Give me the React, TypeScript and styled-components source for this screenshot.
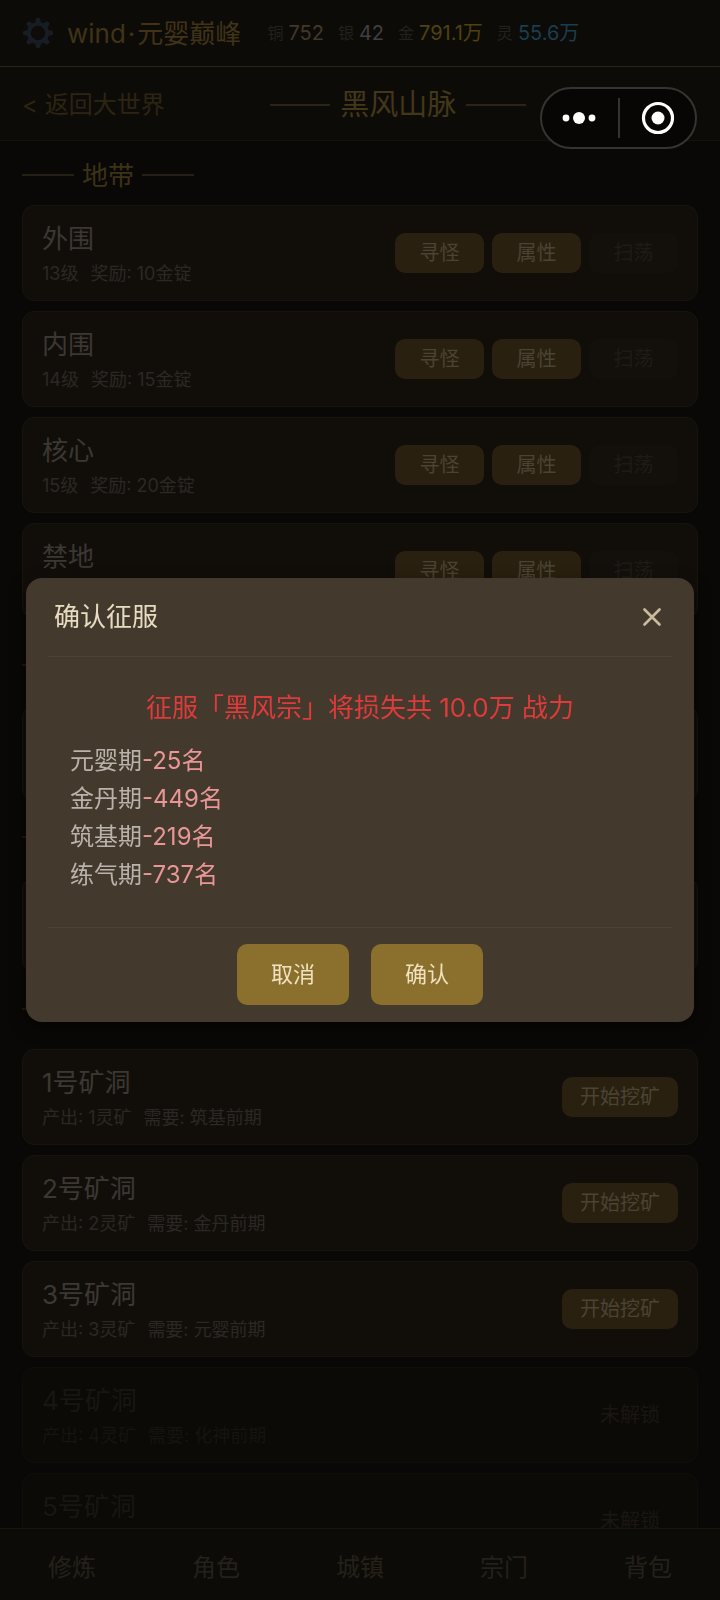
import React from "react";
import styled, { createGlobalStyle } from "styled-components";

const GlobalStyle = createGlobalStyle`
  *, *::before, *::after { box-sizing: border-box; }
  body {
    margin: 0;
    background: #090806;
    font-family: Inter, "Noto Sans CJK SC", sans-serif;
    font-weight: 400;
  }
  button { font: inherit; border: 0; padding: 0; background: none; cursor: pointer; }
  h1, h2, h3, p, ul { margin: 0; padding: 0; font-weight: 400; list-style: none; }
`;

const Page = styled.div`
  height: 100vh;
  display: flex;
  flex-direction: column;
  overflow: hidden;
`;

const TopBar = styled.header`
  flex: none;
  height: 67px;
  padding: 0 22px;
  display: flex;
  align-items: center;
  background: #0d0b07;
  border-bottom: 1px solid #2a2316;
`;

const GearButton = styled.button`
  display: flex;
  width: 32px;
  height: 32px;
  border-radius: 50%;
  background: #0f0b08;
`;

const PlayerName = styled.h1`
  margin-left: 13px;
  padding-top: 2px;
  font-size: 26px;
  line-height: 32px;
  color: #403316;
  white-space: nowrap;
`;

const NameDot = styled.span`
  margin: 0 2px;
`;

const Wallet = styled.ul`
  display: flex;
  gap: 14px;
  margin-left: 26px;
`;

const Coin = styled.li<{ $color: string }>`
  display: flex;
  align-items: center;
  gap: 5px;
  font-size: 20px;
  line-height: 28px;
  color: ${(p) => p.$color};
`;

const CoinLabel = styled.span`
  font-size: 16px;
  color: #24211d;
`;

const PlaceBar = styled.div`
  flex: none;
  height: 74px;
  padding: 2px 22px 0;
  display: flex;
  align-items: center;
  justify-content: space-between;
  background: #0d0b07;
  border-bottom: 1px solid #15120d;
`;

const BackLink = styled.a`
  font-size: 24px;
  line-height: 32px;
  color: #2d2413;
  text-decoration: none;
  white-space: nowrap;
`;

const BarEnd = styled.span`
  width: 66px;
`;

const Ruled = styled.div<{ $rule: number; $gap: number; $color: string }>`
  display: flex;
  align-items: center;
  gap: ${(p) => p.$gap}px;
  &::before,
  &::after {
    content: "";
    width: ${(p) => p.$rule}px;
    height: 2px;
    background: ${(p) => p.$color};
  }
`;

const PlaceName = styled.h2`
  font-size: 29px;
  line-height: 36px;
  color: #43371a;
`;

const Content = styled.main`
  flex: 1;
  min-height: 0;
  overflow: hidden;
  padding: 14px 22px 0;
  display: flex;
  flex-direction: column;
  gap: 16px;
`;

const Section = styled.section<{ $headGap: number; $end?: number }>`
  flex: none;
  display: flex;
  flex-direction: column;
  gap: ${(p) => p.$headGap}px;
  padding-bottom: ${(p) => p.$end || 0}px;
`;

const SectionHead = styled(Ruled)`
  height: 40px;
`;

const SectionTitle = styled.h3`
  padding-top: 2px;
  font-size: 26px;
  line-height: 38px;
  color: #3d3218;
`;

const CardList = styled.ul`
  display: flex;
  flex-direction: column;
  gap: 10px;
`;

const Card = styled.li<{ $locked?: boolean; $edge?: string }>`
  min-height: 96px;
  padding: 0 19px;
  display: flex;
  align-items: center;
  justify-content: space-between;
  background: ${(p) => (p.$locked ? "#0b0a07" : "#110e0a")};
  border: 1px solid ${(p) => p.$edge || (p.$locked ? "#100e0b" : "#17140f")};
  border-radius: 12px;
  --title: ${(p) => (p.$locked ? "#181612" : "#3b3833")};
  --note: ${(p) => (p.$locked ? "#171310" : "#2b2824")};
`;

const CardText = styled.div`
  display: flex;
  flex-direction: column;
  gap: 5px;
  padding-top: 3px;
`;

const CardTitle = styled.h3`
  font-size: 26px;
  line-height: 34px;
  color: var(--title);
`;

const CardNote = styled.p`
  display: flex;
  gap: 12px;
  font-size: 18px;
  line-height: 26px;
  color: var(--note);
`;

const Actions = styled.div`
  display: flex;
  gap: 8px;
`;

const Action = styled.button<{ $wide?: boolean; $tone?: "off" | "bare" }>`
  min-width: 89px;
  height: 40px;
  padding: 0 ${(p) => (p.$wide ? 18 : 20)}px 3px;
  border-radius: 10px;
  font-size: 20px;
  white-space: nowrap;
  background: ${(p) => (p.$tone === "bare" ? "transparent" : p.$tone === "off" ? "#13100c" : "#2a200f")};
  color: ${(p) => (p.$tone === "bare" ? "#1b1613" : p.$tone === "off" ? "#1e1b16" : "#4b4334")};
`;

const TabBar = styled.nav`
  flex: none;
  height: 72px;
  display: flex;
  background: #0d0b07;
  border-top: 1px solid #1a1610;
`;

const Tab = styled.button`
  flex: 1;
  padding-top: 2px;
  font-size: 24px;
  color: #25211a;
`;

const Capsule = styled.div`
  position: fixed;
  top: 87px;
  right: 23px;
  width: 157px;
  height: 62px;
  display: flex;
  align-items: center;
  background: #070605;
  border: 2px solid #353433;
  border-radius: 31px;
`;

const CapsuleButton = styled.button`
  flex: 1;
  height: 40px;
  padding-right: 2px;
  display: flex;
  align-items: center;
  justify-content: center;
  & + & {
    padding: 0 0 0 2px;
    border-left: 2px solid #343332;
  }
`;

const Overlay = styled.div`
  position: fixed;
  inset: 0;
  padding: 0 26px;
  display: flex;
  align-items: center;
  justify-content: center;
`;

const Dialog = styled.div`
  width: 100%;
  padding: 0 22px 17px;
  background: #43392d;
  border-radius: 16px;
  box-shadow: 0 6px 16px rgba(0, 0, 0, 0.5);
`;

const DialogHead = styled.div`
  height: 79px;
  padding: 0 6px;
  display: flex;
  align-items: center;
  justify-content: space-between;
  border-bottom: 1px solid #4d4237;
`;

const DialogTitle = styled.h2`
  font-size: 26px;
  line-height: 34px;
  color: #e8dcc0;
`;

const CloseButton = styled.button`
  display: flex;
  width: 28px;
  height: 28px;
  align-items: center;
  justify-content: center;
`;

const DialogBody = styled.div`
  padding: 31px 22px 33px;
`;

const Warning = styled.p`
  margin-bottom: 14px;
  font-size: 26px;
  line-height: 40px;
  text-align: center;
  color: #de3b3a;
`;

const Loss = styled.li`
  font-size: 24px;
  line-height: 38px;
  color: #b9b3ab;
`;

const LossCount = styled.span`
  color: #e89696;
`;

const DialogFoot = styled.div`
  padding-top: 16px;
  display: flex;
  justify-content: center;
  gap: 22px;
  border-top: 1px solid #4d4237;
`;

const DialogButton = styled.button`
  width: 112px;
  height: 61px;
  padding-bottom: 6px;
  border-radius: 10px;
  font-size: 22px;
  color: #f0e2c0;
  background: #8b6f2c;
`;

const coins = [
  { label: "铜", value: "752", color: "#42382a" },
  { label: "银", value: "42", color: "#403f40" },
  { label: "金", value: "791.1万", color: "#4f4110" },
  { label: "灵", value: "55.6万", color: "#1a3e4d" },
];

const zones = [
  { name: "外围", level: 13, reward: 10 },
  { name: "内围", level: 14, reward: 15 },
  { name: "核心", level: 15, reward: 20 },
  { name: "禁地", level: 16, reward: 25 },
];

const mines = [
  { id: 1, need: "筑基前期" },
  { id: 2, need: "金丹前期" },
  { id: 3, need: "元婴前期" },
  { id: 4, need: "化神前期", locked: true },
  { id: 5, need: "炼虚前期", locked: true },
];

const losses = [
  { rank: "元婴期", count: 25 },
  { rank: "金丹期", count: 449 },
  { rank: "筑基期", count: 219 },
  { rank: "练气期", count: 737 },
];

const tabs = ["修炼", "角色", "城镇", "宗门", "背包"];

const Gear = () => (
  <svg width="32" height="32" viewBox="-16 -16 32 32" fill="#161d24">
    {[0, 45, 90, 135, 180, 225, 270, 315].map((a) => (
      <path
        key={a}
        d="M-4 -9.5 Q-2.4 -11 -2 -14 Q-1.8 -15 -1 -15 H1 Q1.8 -15 2 -14 Q2.4 -11 4 -9.5 Z"
        transform={`rotate(${a})`}
      />
    ))}
    <circle r="9" fill="none" stroke="#161d24" strokeWidth="3.6" />
  </svg>
);

export default function App() {
  return (
    <Page>
      <GlobalStyle />
      <TopBar>
        <GearButton aria-label="设置">
          <Gear />
        </GearButton>
        <PlayerName>
          wind<NameDot>·</NameDot>元婴巅峰
        </PlayerName>
        <Wallet>
          {coins.map((c) => (
            <Coin key={c.label} $color={c.color}>
              <CoinLabel>{c.label}</CoinLabel>
              {c.value}
            </Coin>
          ))}
        </Wallet>
      </TopBar>
      <PlaceBar>
        <BackLink href="#world">&lt; 返回大世界</BackLink>
        <Ruled $rule={60} $gap={10} $color="#2c2417">
          <PlaceName>黑风山脉</PlaceName>
        </Ruled>
        <BarEnd />
      </PlaceBar>

      <Content>
        <Section $headGap={10} $end={10}>
          <SectionHead $rule={52} $gap={8} $color="#261f14">
            <SectionTitle>地带</SectionTitle>
          </SectionHead>
          <CardList>
            {zones.map((z) => (
              <Card key={z.name}>
                <CardText>
                  <CardTitle>{z.name}</CardTitle>
                  <CardNote>
                    <span>{z.level}级</span>
                    <span>奖励: {z.reward}金锭</span>
                  </CardNote>
                </CardText>
                <Actions>
                  <Action>寻怪</Action>
                  <Action>属性</Action>
                  <Action $tone="off" disabled>
                    扫荡
                  </Action>
                </Actions>
              </Card>
            ))}
          </CardList>
        </Section>
        <Section $headGap={20}>
          <SectionHead $rule={52} $gap={8} $color="#26140d" />
          <CardList>
            <Card $edge="#141509" />
          </CardList>
        </Section>
        <Section $headGap={20}>
          <SectionHead $rule={52} $gap={8} $color="#26140d" />
          <CardList>
            <Card $edge="#1f110b" />
          </CardList>
        </Section>
        <Section $headGap={20}>
          <SectionHead $rule={52} $gap={8} $color="#20160e" />
          <CardList>
            {mines.map((m) => (
              <Card key={m.id} $locked={m.locked}>
                <CardText>
                  <CardTitle>{m.id}号矿洞</CardTitle>
                  <CardNote>
                    <span>产出: {m.id}灵矿</span>
                    <span>需要: {m.need}</span>
                  </CardNote>
                </CardText>
                {m.locked ? (
                  <Action $wide $tone="bare" disabled>
                    未解锁
                  </Action>
                ) : (
                  <Action $wide>开始挖矿</Action>
                )}
              </Card>
            ))}
          </CardList>
        </Section>
      </Content>

      <TabBar>
        {tabs.map((t) => (
          <Tab key={t}>{t}</Tab>
        ))}
      </TabBar>

      <Overlay>
        <Dialog role="dialog" aria-modal="true" aria-labelledby="dialog-title">
          <DialogHead>
            <DialogTitle id="dialog-title">确认征服</DialogTitle>
            <CloseButton aria-label="关闭">
              <svg width="18" height="18" viewBox="0 0 18 18" stroke="#c9bb9f" strokeWidth="2.6" strokeLinecap="round">
                <path d="M1.5 1.5 L16.5 16.5 M16.5 1.5 L1.5 16.5" />
              </svg>
            </CloseButton>
          </DialogHead>
          <DialogBody>
            <Warning>征服「黑风宗」将损失共 10.0万 战力</Warning>
            <ul>
              {losses.map((l) => (
                <Loss key={l.rank}>
                  {l.rank}
                  <LossCount>-{l.count}名</LossCount>
                </Loss>
              ))}
            </ul>
          </DialogBody>
          <DialogFoot>
            <DialogButton>取消</DialogButton>
            <DialogButton>确认</DialogButton>
          </DialogFoot>
        </Dialog>
      </Overlay>

      <Capsule>
        <CapsuleButton aria-label="更多">
          <svg width="34" height="14" viewBox="0 0 34 14" fill="#fff">
            <circle cx="4" cy="7" r="3.4" />
            <circle cx="17" cy="7" r="6" />
            <circle cx="30" cy="7" r="3.4" />
          </svg>
        </CapsuleButton>
        <CapsuleButton aria-label="退出">
          <svg width="34" height="34" viewBox="0 0 34 34">
            <circle cx="17" cy="17" r="14.5" fill="none" stroke="#fff" strokeWidth="3.2" />
            <circle cx="17" cy="17" r="6.5" fill="#fff" />
          </svg>
        </CapsuleButton>
      </Capsule>
    </Page>
  );
}
